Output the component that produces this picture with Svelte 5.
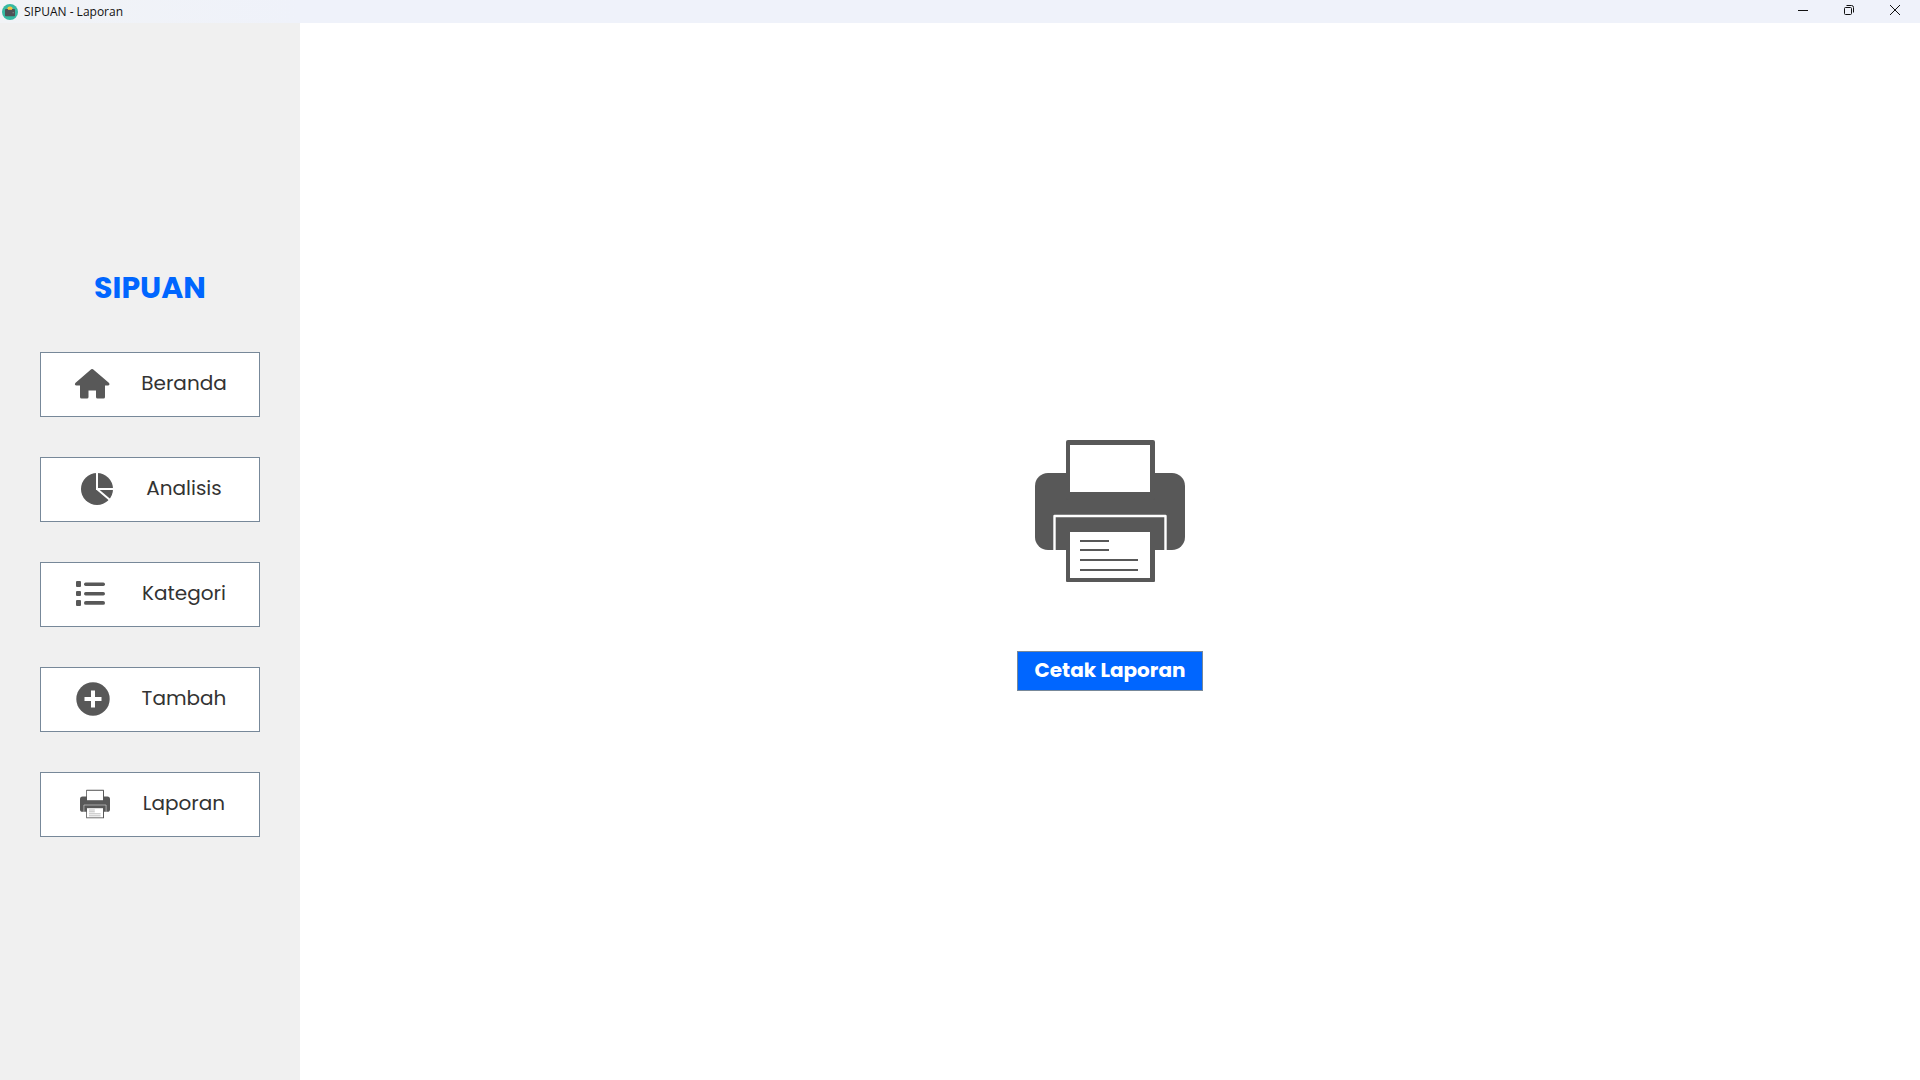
<script>
  const items = [
    { icon: 'home', label: 'Beranda' },
    { icon: 'pie', label: 'Analisis' },
    { icon: 'list', label: 'Kategori' },
    { icon: 'plus', label: 'Tambah' },
    { icon: 'printer', label: 'Laporan' }
  ];
</script>

{#snippet printer()}
  <svg viewBox="0 0 200 200" aria-hidden="true">
    <rect x="25" y="62" width="150" height="77" rx="13" fill="#585858" />
    <path d="M44.500 139V105H155.500V139" fill="none" stroke="#fff" stroke-width="2.400" stroke-linejoin="round" />
    <rect x="56" y="29" width="89" height="60" rx="2" fill="#585858" />
    <rect x="60" y="34" width="80" height="47" fill="#fff" />
    <rect x="56" y="116" width="89" height="55" rx="1" fill="#585858" />
    <rect x="60" y="121" width="80" height="46" fill="#fff" />
    <path d="M70 130H99M70 139H99M70 149H128M70 159H128" stroke="#585858" stroke-width="2" />
  </svg>
{/snippet}

<div class="window">
  <header class="titlebar">
    <svg class="app-icon" viewBox="0 0 16 16" aria-hidden="true">
      <circle cx="8" cy="8" r="8" fill="#35b9a2" />
      <circle cx="8" cy="5.200" r="2.700" fill="#f5c341" />
      <rect x="3" y="5" width="10" height="7.200" rx="0.800" fill="#4e5156" />
      <path d="M6 3.200h4v2.600H6z" fill="#f5c341" />
      <rect x="10.500" y="8" width="1.500" height="1.300" fill="#777a7e" />
    </svg>
    <span class="title">SIPUAN - Laporan</span>
    <div class="controls">
      <button aria-label="Minimize">
        <svg viewBox="0 0 12 12"><path d="M1 6.500H11" /></svg>
      </button>
      <button aria-label="Restore">
        <svg viewBox="0 0 12 12">
          <rect x="1.500" y="3.500" width="7" height="7" rx="1" />
          <path d="M3.500 1.500H8.500a2 2 0 0 1 2 2V8.500" />
        </svg>
      </button>
      <button aria-label="Close">
        <svg viewBox="0 0 12 12"><path d="M1 1L11 11M11 1L1 11" /></svg>
      </button>
    </div>
  </header>

  <div class="body">
    <aside>
      <h1>SIPUAN</h1>
      <nav>
        {#each items as item}
          <button class="item">
            <span class="icon">
              {#if item.icon === 'home'}
                <svg viewBox="0 0 40 40" aria-hidden="true">
                  <path d="M18.200 5.300a1.400 1.400 0 0 1 1.800 0L35.800 18.800c1.300 1.200.7 2.700-.9 2.700H32V33a1.500 1.500 0 0 1-1.500 1.500H24.500A1.500 1.500 0 0 1 23 33V26.500H15.500V33a1.500 1.500 0 0 1-1.500 1.500H8.500A1.500 1.500 0 0 1 7 33V21.500H3.500c-1.700 0-2.200-1.500-.9-2.700Z" fill="#585858" />
                </svg>
              {:else if item.icon === 'pie'}
                <svg viewBox="0 0 40 40" aria-hidden="true">
                  <circle cx="19" cy="20" r="16" fill="#585858" />
                  <path d="M19 2V20H36M19 20L32 31" fill="none" stroke="#fff" stroke-width="2" />
                </svg>
              {:else if item.icon === 'list'}
                <svg viewBox="0 0 40 40" aria-hidden="true">
                  <g fill="#585858">
                    <rect x="2" y="7" width="5" height="6" rx="1" />
                    <rect x="2" y="17" width="5" height="5" rx="1" />
                    <rect x="2" y="26" width="5" height="6" rx="1" />
                    <rect x="10" y="8.500" width="21" height="3.400" rx="1.700" />
                    <rect x="10" y="18" width="21" height="3.400" rx="1.700" />
                    <rect x="10" y="27" width="21" height="3.800" rx="1.900" />
                  </g>
                </svg>
              {:else if item.icon === 'plus'}
                <svg viewBox="0 0 40 40" aria-hidden="true">
                  <circle cx="19" cy="20" r="16.700" fill="#585858" />
                  <path d="M19 11.500V28.500M10.500 20H27.500" stroke="#fff" stroke-width="4" />
                </svg>
              {:else}
                {@render printer()}
              {/if}
            </span>
            <span class="label">{item.label}</span>
          </button>
        {/each}
      </nav>
    </aside>

    <main>
      <div class="picture">{@render printer()}</div>
      <button class="print">Cetak Laporan</button>
    </main>
  </div>
</div>

<style>
  :global(body) {
    margin: 0;
  }
  .window {
    display: flex;
    flex-direction: column;
    min-height: 100vh;
    background: #fff;
    font-family: Poppins, Inter, sans-serif;
  }
  button {
    margin: 0;
    padding: 0;
    font-family: inherit;
    cursor: pointer;
  }
  svg {
    display: block;
    width: 100%;
    height: 100%;
  }
  .titlebar {
    display: flex;
    align-items: center;
    height: 23px;
    padding: 0 2px;
    background: linear-gradient(90deg, #f1f3f6, #eff2fa 300px);
  }
  .app-icon {
    width: 16px;
    height: 16px;
    flex: none;
  }
  .title {
    margin-left: 6px;
    color: #111;
    font: 12px/16px "Segoe UI", "Open Sans", sans-serif;
  }
  .controls {
    display: flex;
    align-self: flex-start;
    margin-left: auto;
  }
  .controls button {
    display: flex;
    align-items: center;
    justify-content: center;
    width: 46px;
    height: 20px;
    border: 0;
    background: transparent;
  }
  .controls svg {
    width: 12px;
    height: 12px;
    fill: none;
    stroke: #111;
  }
  .body {
    display: flex;
    flex: 1;
  }
  aside {
    display: flex;
    flex-direction: column;
    justify-content: center;
    gap: 40px;
    box-sizing: border-box;
    width: 300px;
    flex: none;
    padding: 0 40px;
    background: #f0f0f0;
  }
  h1 {
    margin: 0;
    padding-bottom: 2px;
    color: #06f;
    font-size: 30px;
    font-weight: 700;
    line-height: 44px;
    text-align: center;
  }
  nav {
    display: flex;
    flex-direction: column;
    gap: 40px;
  }
  .item {
    display: flex;
    align-items: center;
    justify-content: center;
    gap: 28px;
    box-sizing: border-box;
    height: 65px;
    padding-bottom: 1px;
    border: 1px solid #778899;
    background: #fff;
    color: #333;
  }
  .icon {
    width: 40px;
    height: 40px;
    flex: none;
  }
  .label {
    padding-bottom: 2px;
    font-size: 20px;
    line-height: 28px;
  }
  main {
    display: flex;
    flex: 1;
    flex-direction: column;
    align-items: center;
    justify-content: center;
    gap: 40px;
    padding-bottom: 1px;
  }
  .picture {
    width: 200px;
    height: 200px;
  }
  .print {
    box-sizing: border-box;
    height: 40px;
    padding: 0 17px 2px;
    border: 1px solid #778899;
    background: #06f;
    color: #fff;
    font-size: 20px;
    font-weight: 700;
  }
</style>
